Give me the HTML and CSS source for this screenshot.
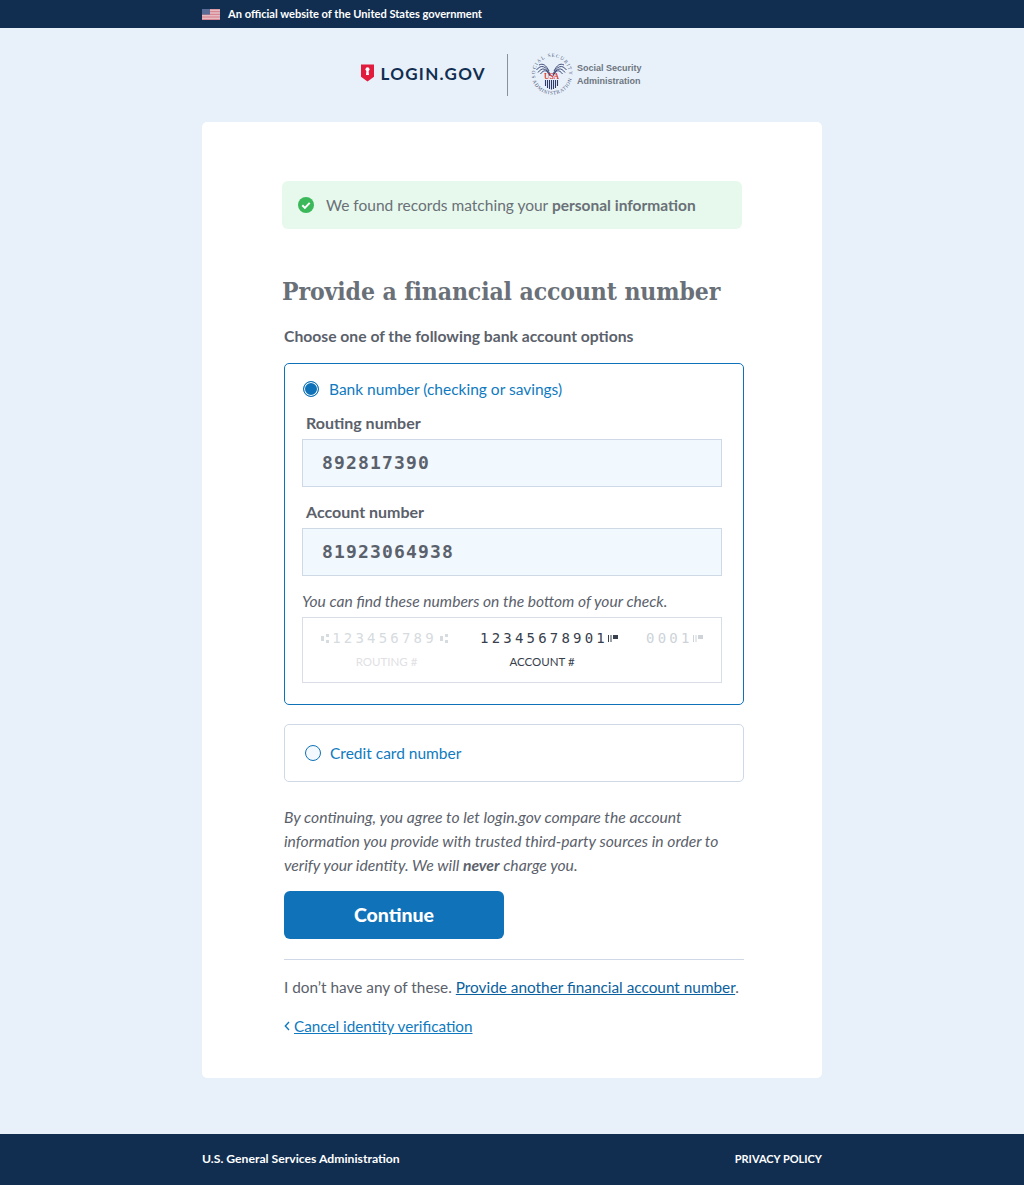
FILE: index.html
```html
<!DOCTYPE html>
<html lang="en">
<head>
  <meta charset="UTF-8" />
  <title>Provide a financial account number - login.gov</title>
  <link rel="stylesheet" href="styles.css">
</head>
<body>

  <div class="gov-banner">
    <div class="wrap">
      <svg class="flag" width="18" height="11" viewBox="0 0 18 11">
        <rect width="18" height="11" fill="#f3e3e6"/>
        <path d="M0 .8h18M0 2.4h18M0 4h18M0 5.6h18M0 7.2h18M0 8.8h18M0 10.4h18" stroke="#d0717f" stroke-width=".9"/>
        <rect width="8" height="5.6" fill="#5a6b95"/>
      </svg>
      <span class="banner-text">An official website of the United States government</span>
    </div>
  </div>

  <div class="header">
    <div class="logo">
      <svg width="13" height="18" viewBox="0 0 13 18">
        <path d="M0 .5h13v12.200l-6.500 4.800L0 12.700z" fill="#e21c3d"/>
        <circle cx="6.500" cy="5.300" r="2" fill="#fff"/>
        <path d="M5.500 6h2l.5 5H5z" fill="#fff"/>
      </svg>
      <span class="logo-text">LOGIN.GOV</span>
    </div>
    <div class="logo-divider"></div>
    <svg class="seal" width="44" height="44" viewBox="0 0 44 44">
      <defs>
        <path id="sealTop" d="M5.500 26A17 17 0 1 1 38.500 26"/>
        <path id="sealBottom" d="M1.900 26A20.500 20.500 0 0 0 42.100 26"/>
      </defs>
      <text class="seal-text"><textPath href="#sealTop" textLength="58">SOCIAL SECURITY</textPath></text>
      <text class="seal-text"><textPath href="#sealBottom" textLength="52" startOffset="3">ADMINISTRATION</textPath></text>
      <g fill="none" stroke="#2e3a6b" stroke-width=".9">
        <path d="M20 22C16 14 11 12 6.500 18"/>
        <path d="M20 23C16 16 12 15 8 20.500"/>
        <path d="M20 24C17 18 14 17 10.500 22"/>
        <path d="M19 19C16 13 13 11 9 13"/>
        <path d="M23 22C27 14 32 12 36.500 18"/>
        <path d="M23 23C27 16 31 15 35 20.500"/>
        <path d="M23 24C26 18 29 17 32.500 22"/>
        <path d="M24 19C27 13 30 11 34 13"/>
      </g>
      <text class="seal-usa" x="21.500" y="27" text-anchor="middle">USA</text>
      <path d="M15.500 28v6M17.500 28v8M19.500 28v9M21.500 28v9.500M23.500 28v9M25.500 28v8M27.500 28v6" stroke="#2e3a6b" stroke-width="1.100"/>
    </svg>
    <div class="agency">Social Security<br>Administration</div>
  </div>

  <div class="card">
    <div class="alert">
      <svg width="16" height="16" viewBox="0 0 16 16">
        <circle cx="8" cy="8" r="8" fill="#3bb85a"/>
        <path d="M4.300 8.300l2.600 2.600 4.800-5" fill="none" stroke="#fff" stroke-width="2"/>
      </svg>
      <span class="alert-text">We found records matching your <b>personal information</b></span>
    </div>

    <h1 class="title">Provide a financial account number</h1>

    <div class="form">
      <div class="legend">Choose one of the following bank account options</div>

      <div class="option option-active">
        <div class="radio-row">
          <span class="radio radio-on"></span>
          <span>Bank number (checking or savings)</span>
        </div>
        <label class="field-label">Routing number</label>
        <input class="field" type="text" value="892817390">
        <label class="field-label field-label-2">Account number</label>
        <input class="field" type="text" value="81923064938">
        <p class="hint">You can find these numbers on the bottom of your check.</p>
        <div class="check">
          <div class="check-col check-routing">
            <div class="micr">
              <svg class="sym" width="8" height="9" viewBox="0 0 8 9"><path d="M0 2h3v5H0zM5 0h3v3H5zM5 6h3v3H5z"/></svg>
              <span>123456789</span>
              <svg class="sym" width="8" height="9" viewBox="0 0 8 9"><path d="M0 2h3v5H0zM5 0h3v3H5zM5 6h3v3H5z"/></svg>
            </div>
            <div class="check-label">ROUTING #</div>
          </div>
          <div class="check-col check-account">
            <div class="micr">
              <span>12345678901</span>
              <svg class="sym" width="10" height="7" viewBox="0 0 10 7"><path d="M0 0h1v7H0zM2.500 0h1v7h-1zM5 0h5v4H5z"/></svg>
            </div>
            <div class="check-label">ACCOUNT #</div>
          </div>
          <div class="check-col check-serial">
            <div class="micr">
              <span>0001</span>
              <svg class="sym" width="10" height="7" viewBox="0 0 10 7"><path d="M0 0h1v7H0zM2.500 0h1v7h-1zM5 0h5v4H5z"/></svg>
            </div>
          </div>
        </div>
      </div>

      <div class="option option-card">
        <div class="radio-row">
          <span class="radio"></span>
          <span>Credit card number</span>
        </div>
      </div>

      <p class="consent">By continuing, you agree to let login.gov compare the account information you provide with trusted third-party sources in order to verify your identity. We will <b>never</b> charge you.</p>

      <button class="btn-submit">Continue</button>

      <hr class="rule">

      <p class="other">I don’t have any of these. <a href="#">Provide another financial account number</a>.</p>

      <div class="cancel">
        <svg width="6" height="10" viewBox="0 0 6 10"><path d="M5 1L1.300 5 5 9" fill="none" stroke="#0f7ac0" stroke-width="1.400"/></svg>
        <a href="#">Cancel identity verification</a>
      </div>
    </div>
  </div>

  <div class="footer">
    <div class="wrap footer-inner">
      <span class="footer-org">U.S. General Services Administration</span>
      <span class="footer-link">PRIVACY POLICY</span>
    </div>
  </div>

</body>
</html>
```

FILE: styles.css
```css
body {
  font-family: 'Lato', 'Open Sans', sans-serif;
  margin: 0;
  background: #e8f1fa;
  color: #5b616b;
  font-size: 15.500px;
}
.wrap {
  width: 620px;
  margin: 0 auto;
}
.gov-banner {
  background: #112e51;
  color: #fff;
  height: 28px;
  font-size: 11.100px;
  font-weight: 700;
}
.gov-banner .wrap {
  display: flex;
  align-items: center;
  gap: 8px;
  height: 28px;
}
.banner-text {
  margin-bottom: 1px;
}
.header {
  height: 94px;
  display: flex;
  align-items: center;
  justify-content: center;
  padding-right: 21px;
  padding-bottom: 1px;
  box-sizing: border-box;
}
.logo {
  display: flex;
  align-items: center;
  gap: 6px;
  margin-bottom: 3px;
}
.logo-text {
  font-weight: 700;
  font-size: 17px;
  letter-spacing: 1.300px;
  color: #112e51;
}
.logo-divider {
  width: 1px;
  height: 42px;
  background: #8b9199;
  margin: 0 22px 0 21px;
}
.seal {
  margin-right: 3px;
  margin-bottom: 2px;
}
.seal-text {
  font-family: 'Liberation Serif', serif;
  font-size: 5px;
  fill: #4a5478;
}
.seal-usa {
  font-family: 'Liberation Serif', serif;
  font-size: 7.500px;
  font-weight: 700;
  fill: #d83933;
}
.agency {
  font-family: 'Liberation Sans', sans-serif;
  font-size: 9px;
  font-weight: 700;
  line-height: 13px;
  color: #6d7580;
  margin-top: 1px;
}
.card {
  width: 620px;
  height: 956px;
  margin: 0 auto 56px;
  background: #fff;
  border-radius: 5px;
  padding: 59px 80px 0;
  box-sizing: border-box;
}
.alert {
  width: 460px;
  height: 48px;
  background: #e7f9ec;
  border-radius: 6px;
  display: flex;
  align-items: center;
  gap: 12px;
  padding-left: 16px;
  box-sizing: border-box;
  color: #6a7078;
}
.alert-text {
  margin-bottom: 1px;
}
.title {
  font-family: 'DejaVu Serif Condensed', 'DejaVu Serif', serif;
  font-stretch: condensed;
  font-size: 24.500px;
  font-weight: 700;
  letter-spacing: -0.100px;
  color: #6a7078;
  margin: 43px 0 -1px;
  line-height: 40px;
  white-space: nowrap;
}
.form {
  margin-left: 2px;
  width: 460px;
}
.legend {
  font-size: 15.700px;
  font-weight: 700;
  margin-top: 14px;
  line-height: 22px;
  height: 22px;
}
.option {
  box-sizing: border-box;
  border-radius: 5px;
}
.option-active {
  border: 1px solid #0f72b9;
  height: 342px;
  margin-top: 16px;
  padding: 0 21px 0 17px;
}
.option-card {
  border: 1px solid #cfd8e6;
  height: 58px;
  margin-top: 19px;
  padding: 0 21px 0 20px;
  display: flex;
  align-items: center;
}
.radio-row {
  display: flex;
  align-items: center;
  gap: 9px;
  color: #0f7ac0;
  height: 22px;
}
.option-active .radio-row {
  gap: 10px;
  margin: 14px 0 0 1px;
}
.radio {
  width: 14px;
  height: 14px;
  border: 1px solid #0f72b9;
  border-radius: 50%;
  background: #f3f9fe;
}
.radio-on {
  background: #0f72b9;
  box-shadow: inset 0 0 0 1px #fff;
}
.field-label {
  display: block;
  font-size: 16px;
  font-weight: 700;
  margin: 12px 0 5px 4px;
  line-height: 22px;
}
.field-label-2 {
  margin-top: 14px;
}
.field {
  display: block;
  width: 100%;
  height: 48px;
  padding: 0 19px 2px;
  box-sizing: border-box;
  background: #f1f8fe;
  border: 1px solid #cfd8e6;
  font-family: 'DejaVu Sans Mono', monospace;
  font-size: 18px;
  font-weight: 700;
  letter-spacing: 1.160px;
  color: #5b616b;
  outline: none;
}
.hint {
  font-style: italic;
  font-size: 15.600px;
  margin: 14px 0 5px;
  line-height: 22px;
}
.check {
  border: 1px solid #d9dde6;
  height: 66px;
  box-sizing: border-box;
  display: flex;
  padding: 10px 0 0 18px;
}
.check-col {
  text-align: center;
}
.check-routing {
  width: 127px;
  margin-right: 32px;
  color: #d6dbe0;
}
.check-account {
  width: 138px;
  margin-right: 28px;
  color: #37404c;
}
.check-serial {
  width: 57px;
  color: #cdd3d9;
}
.micr {
  font-family: 'DejaVu Sans Mono', monospace;
  font-size: 14px;
  letter-spacing: 3.200px;
  line-height: 20px;
  display: flex;
  align-items: center;
  justify-content: space-between;
  white-space: nowrap;
}
.sym {
  fill: currentColor;
}
.check-label {
  font-size: 11.500px;
  margin-top: 7px;
}
.check-routing .check-label {
  color: #dfe1e4;
  padding-left: 4px;
}
.check-account .check-label {
  padding-right: 14px;
}
.consent {
  font-style: italic;
  margin: 23px 0 0;
  line-height: 24px;
  font-size: 15.700px;
}
.consent b {
  font-weight: 700;
}
.btn-submit {
  display: block;
  width: 220px;
  height: 48px;
  margin-top: 14px;
  padding-bottom: 3px;
  background: #1072b9;
  color: #fff;
  border: none;
  border-radius: 6px;
  font-family: inherit;
  font-size: 19.500px;
  font-weight: 900;
}
.rule {
  border: none;
  border-top: 1px solid #cfd8e6;
  margin: 20px 0 0;
}
.other {
  margin: 16px 0 0;
  line-height: 22px;
  font-size: 15.350px;
  white-space: nowrap;
}
.other a {
  color: #0b619e;
}
.cancel {
  display: flex;
  align-items: center;
  gap: 4px;
  margin-top: 17px;
  line-height: 22px;
  font-size: 15.250px;
}
.cancel a {
  color: #0f7ac0;
}
.footer {
  background: #112e51;
  color: #fff;
  height: 51px;
  font-weight: 700;
}
.footer-inner {
  display: flex;
  justify-content: space-between;
  align-items: center;
  height: 49px;
}
.footer-org {
  font-size: 12.200px;
}
.footer-link {
  font-size: 11px;
}
```
